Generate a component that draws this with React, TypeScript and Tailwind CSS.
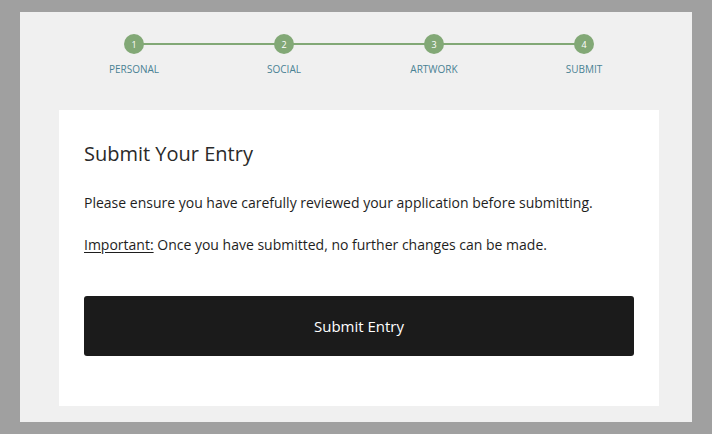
import React from "react";

const steps = ["Personal", "Social", "Artwork", "Submit"];

export default function App() {
  return (
    <div className="w-[712px] h-[434px] bg-[#a0a0a0] pt-[12px] pl-[20px] font-['Open_Sans',sans-serif]">
      <div className="w-[672px] h-[410px] bg-[#f0f0f0] flex flex-col items-start pl-[39px]">
        <div className="relative w-[600px] mt-[22px] grid grid-cols-4">
          <div className="absolute left-[75px] right-[75px] top-[9px] h-[2px] bg-[#82a876]" />
          {steps.map((s, i) => (
            <div key={s} className="relative flex flex-col items-center">
              <div className="w-[20px] h-[20px] rounded-full bg-[#82a876] text-white text-[9px] leading-none flex items-center justify-center">
                {i + 1}
              </div>
              <div className="mt-[9px] text-[10px] leading-[12px] text-[#4a8294] uppercase">
                {s}
              </div>
            </div>
          ))}
        </div>
        <div className="mt-[35px] w-[600px] h-[296px] bg-white px-[25px] pt-[30px]">
          <h1 className="text-[20px] leading-[28px] text-[#2a2a2a]">Submit Your Entry</h1>
          <p className="mt-[25px] text-[14px] leading-[20px] text-[#1e1e1e]">
            Please ensure you have carefully reviewed your application before submitting.
          </p>
          <p className="mt-[22px] text-[14px] leading-[20px] text-[#1e1e1e]">
            <span className="underline underline-offset-2">Important:</span> Once you have submitted, no further changes can be made.
          </p>
          <button className="mt-[41px] w-full h-[60px] bg-[#1b1b1b] rounded-[3px] text-white text-[15px]">
            Submit Entry
          </button>
        </div>
      </div>
    </div>
  );
}
